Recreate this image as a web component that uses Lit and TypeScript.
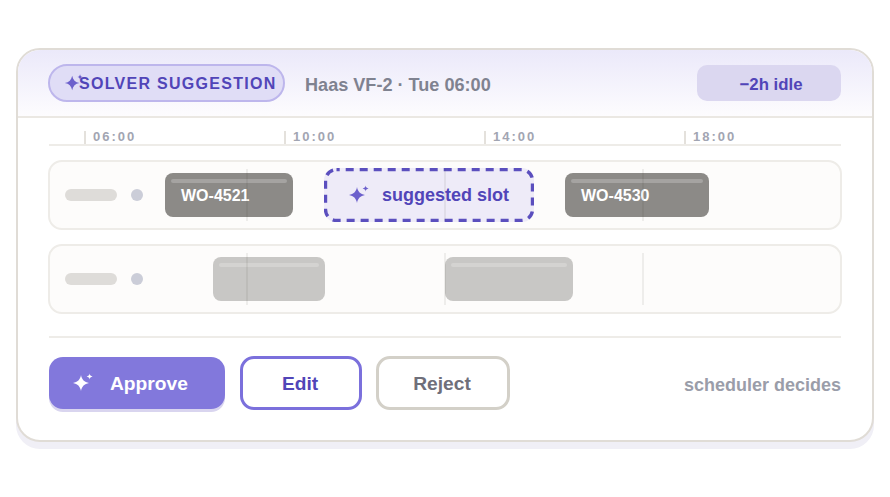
import { LitElement, html, css, svg } from "lit";
import { customElement } from "lit/decorators.js";

const spark = () => html`<svg class="spark" viewBox="0 0 24 24" aria-hidden="true">
  ${svg`<path fill="currentColor" d="M10 4C10.8 8.6 13.4 11.2 18 12C13.4 12.8 10.8 15.4 10 20C9.2 15.4 6.6 12.8 2 12C6.6 11.2 9.2 8.6 10 4Z"/>
  <path fill="currentColor" d="M18.6 2.4C18.9 4.2 19.6 5 21.6 5.4C19.6 5.8 18.9 6.6 18.6 8.4C18.3 6.6 17.6 5.8 15.6 5.4C17.6 5 18.3 4.2 18.6 2.4Z"/>`}
</svg>`;

const rows = [
  {
    dim: false,
    blocks: [
      { left: 115, width: 128, label: "WO-4521" },
      { left: 515, width: 144, label: "WO-4530" },
    ],
  },
  {
    dim: true,
    blocks: [
      { left: 163, width: 112, label: "" },
      { left: 395, width: 128, label: "" },
    ],
  },
];

@customElement("app-root")
export class AppRoot extends LitElement {
  static styles = css`
    :host {
      display: block;
      padding: 48px 16px 55px;
      font-family: "Liberation Sans", Arial, sans-serif;
      font-weight: 700;
    }
    .card {
      width: 858px;
      height: 394px;
      box-sizing: border-box;
      border: 2px solid #e0dcd6;
      border-radius: 24px;
      background: #fff;
      box-shadow: 0 7px 0 #f0eff6;
    }
    .head {
      height: 68px;
      box-sizing: border-box;
      border-bottom: 2px solid #ebe8e3;
      border-radius: 22px 22px 0 0;
      background: linear-gradient(180deg, #ebe9fa 0%, #fdfcfe 100%);
      display: flex;
      align-items: center;
      padding: 0 31px 0 30px;
    }
    .pill {
      height: 38px;
      width: 237px;
      box-sizing: border-box;
      border: 2px solid #bdb6ec;
      border-radius: 19px;
      background: #e0ddf6;
      color: #5145b8;
      display: flex;
      align-items: center;
      padding-left: 13px;
      font-size: 16px;
      letter-spacing: 1.28px;
      white-space: nowrap;
    }
    .pill span {
      margin-top: 2px;
    }
    .pill .spark {
      width: 22px;
      height: 22px;
      margin-right: -6px;
      color: #6c60cc;
      flex: none;
    }
    .machine {
      margin-left: 20px;
      margin-top: 5px;
      font-size: 18.1px;
      color: #7f8290;
    }
    .chip {
      margin-left: auto;
      width: 144px;
      height: 36px;
      padding: 3px 0 0 4px;
      box-sizing: border-box;
      border-radius: 10px;
      background: #dbd7f0;
      color: #5145b8;
      font-size: 16.8px;
      display: flex;
      align-items: center;
      justify-content: center;
    }
    .body {
      padding: 0 31px;
    }
    .axis {
      display: flex;
      height: 28px;
      box-sizing: border-box;
      padding: 13px 0 0 35px;
      border-bottom: 2px solid #eeece8;
    }
    .tick {
      width: 200px;
      height: 13px;
      box-sizing: border-box;
      border-left: 2px solid #e4e1dc;
      padding-left: 7px;
      font-size: 13px;
      line-height: 11px;
      letter-spacing: 2px;
      color: #a2a5b2;
      flex: none;
    }
    .rows {
      display: flex;
      flex-direction: column;
      gap: 14px;
      margin-top: 14px;
    }
    .row {
      position: relative;
      height: 70px;
      box-sizing: border-box;
      border: 2px solid #eeece8;
      border-radius: 14px;
      background: #fdfcfb;
      margin: 0 -1px;
      display: flex;
      align-items: center;
      padding-left: 15px;
      gap: 14px;
    }
    .lab {
      width: 52px;
      height: 12px;
      border-radius: 6px;
      background: #dedcd9;
    }
    .dot {
      width: 12px;
      height: 12px;
      border-radius: 50%;
      background: #cbcdd8;
    }
    .block {
      position: absolute;
      top: 11px;
      height: 44px;
      border-radius: 8px;
      background: #8c8a87;
      color: #fff;
      font-size: 16px;
      line-height: 46px;
      padding-left: 16px;
      box-sizing: border-box;
    }
    .block::before {
      content: "";
      position: absolute;
      left: 6px;
      right: 6px;
      top: 6px;
      height: 4px;
      border-radius: 2px;
      background: #a5a3a1;
    }
    .row.dim .block {
      background: #c8c7c5;
    }
    .row.dim .block::before {
      background: #d4d3d1;
    }
    .slot {
      position: absolute;
      left: 274px;
      top: 6px;
      width: 210px;
      height: 54px;
      box-sizing: border-box;
      border-radius: 12px;
      background: #eeebf8;
      color: #5145b8;
      font-size: 18px;
      display: flex;
      align-items: center;
      padding-left: 23px;
      gap: 11px;
    }
    .slot .spark {
      width: 24px;
      height: 24px;
      color: #6c60cc;
      flex: none;
    }
    .dash {
      position: absolute;
      inset: 0;
      width: 100%;
      height: 100%;
      fill: none;
      stroke: #5b4fbe;
      stroke-width: 3.4;
      stroke-dasharray: 8 6;
      stroke-dashoffset: 4.8;
    }
    .line {
      position: absolute;
      top: 7px;
      bottom: 7px;
      width: 1.5px;
      background: rgba(60, 50, 40, 0.075);
    }
    .foot {
      margin-top: 22px;
      border-top: 2px solid #eeece8;
      display: flex;
      align-items: center;
      padding-top: 18px;
    }
    .btn {
      box-sizing: border-box;
      height: 54px;
      border-radius: 14px;
      background: #fff;
      font-size: 19.2px;
      display: flex;
      align-items: center;
      justify-content: center;
      flex: none;
    }
    .approve {
      width: 176px;
      height: 52px;
      background: #8278dc;
      color: #fff;
      box-shadow: 0 3px 0 #d9d5ef;
      justify-content: flex-start;
      padding-left: 22px;
      gap: 15px;
    }
    .approve span {
      margin-top: 2px;
    }
    .approve .spark {
      width: 24px;
      height: 24px;
    }
    .edit {
      width: 122px;
      margin-left: 15px;
      border: 3px solid #7b70dc;
      color: #5145b8;
      padding: 2px 2px 0 0;
    }
    .reject {
      width: 134px;
      margin-left: 14px;
      border: 3px solid #d3d0c8;
      color: #6f6f7a;
      padding: 2px 2px 0 0;
    }
    .note {
      margin-left: auto;
      margin-top: 4px;
      font-size: 18px;
      color: #9a9da9;
    }
  `;

  render() {
    return html`<div class="card">
      <div class="head">
        <div class="pill">${spark()}<span>SOLVER SUGGESTION</span></div>
        <div class="machine">Haas VF-2 · Tue 06:00</div>
        <div class="chip">−2h idle</div>
      </div>
      <div class="body">
        <div class="axis">
          ${["06:00", "10:00", "14:00", "18:00"].map((t) => html`<div class="tick">${t}</div>`)}
        </div>
        <div class="rows">
          ${rows.map(
            (r, i) => html`<div class="row ${r.dim ? "dim" : ""}">
              <div class="lab"></div>
              <div class="dot"></div>
              ${r.blocks.map(
                (b) => html`<div class="block" style="left:${b.left}px;width:${b.width}px">${b.label}</div>`
              )}
              ${i === 0
                ? html`<div class="slot">
                    ${spark()}<span>suggested slot</span>
                    <svg class="dash" viewBox="0 0 210 54" aria-hidden="true">
                      ${svg`<rect x="1.5" y="1.5" width="207" height="51" rx="11" ry="11"></rect>`}
                    </svg>
                  </div>`
                : ""}
              ${[196, 394, 592].map((x) => html`<div class="line" style="left:${x}px"></div>`)}
            </div>`
          )}
        </div>
        <div class="foot">
          <div class="btn approve">${spark()}<span>Approve</span></div>
          <div class="btn edit">Edit</div>
          <div class="btn reject">Reject</div>
          <div class="note">scheduler decides</div>
        </div>
      </div>
    </div>`;
  }
}
